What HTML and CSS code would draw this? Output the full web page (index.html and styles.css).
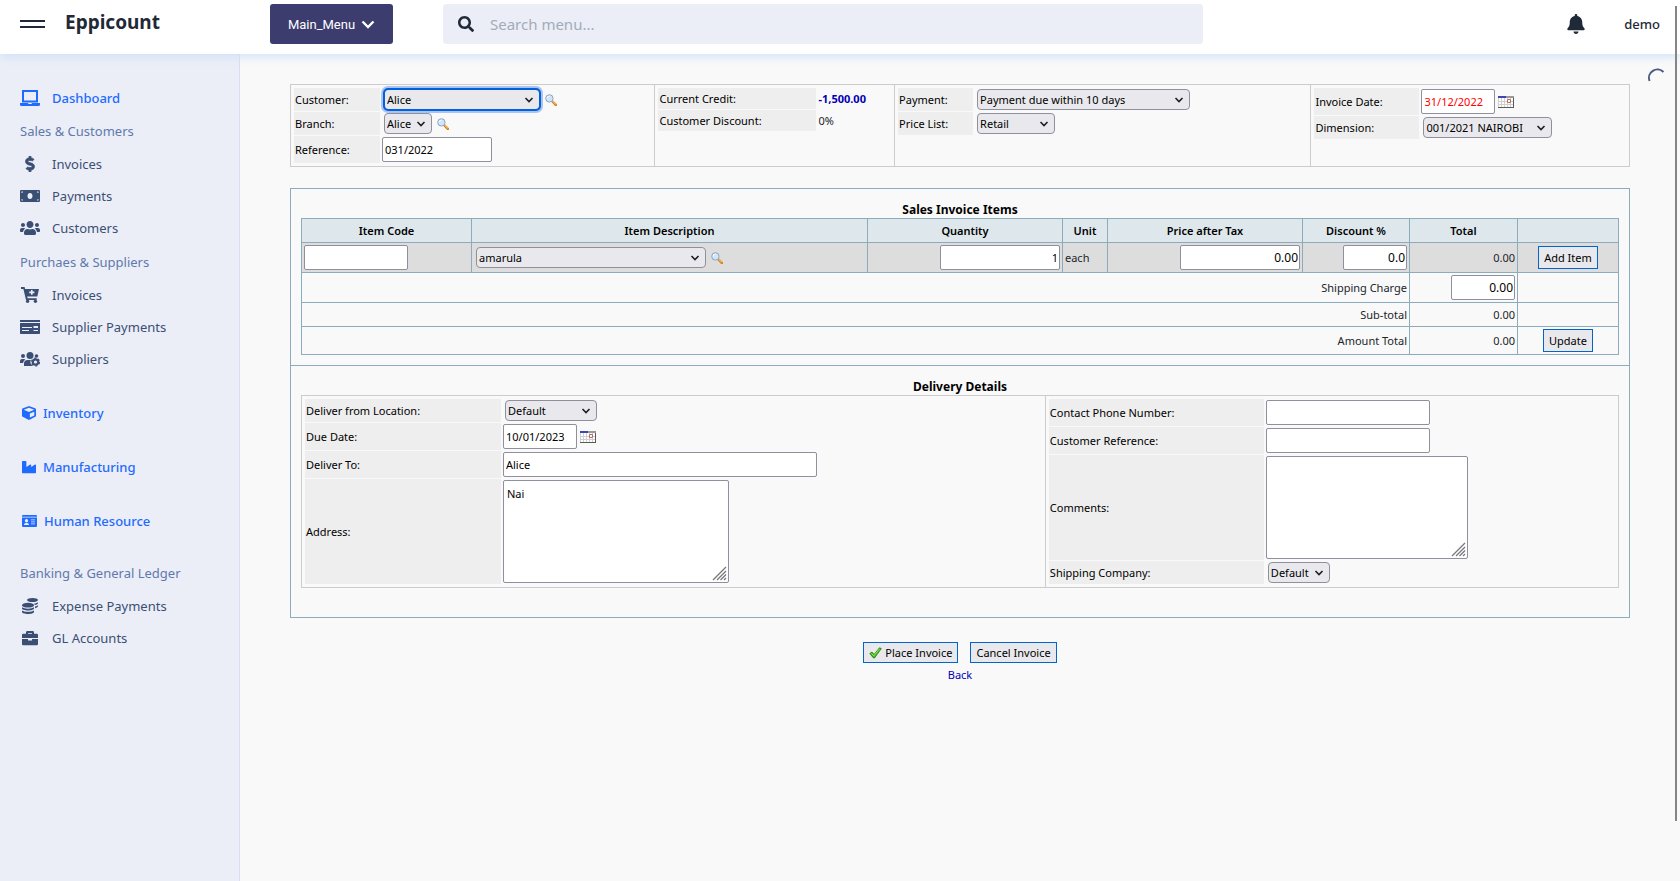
FILE: index.html
```html
<!DOCTYPE html>
<html lang="en">
<head>
<meta charset="utf-8">
<title>Eppicount</title>
<link rel="stylesheet" href="styles.css">
</head>
<body>
<svg class="defs" width="0" height="0" aria-hidden="true">
  <symbol id="chev" viewBox="0 0 10 8"><path d="M1.500 2 5 5.500 8.500 2" fill="none" stroke="#1d1d22" stroke-width="1.600"/></symbol>
  <symbol id="grip" viewBox="0 0 15 15"><path d="M1 14 14 1M5 14l9-9M8.500 14l5.500-5.500M12 14l2-2" fill="none" stroke="#77777c" stroke-width="1.300"/></symbol>
  <symbol id="lens" viewBox="0 0 12 12"><path d="m7.500 7.500 3.300 3.300" stroke="#c8781c" stroke-width="2.400" stroke-linecap="round"/><path d="m7.500 7 3.500 3.500" stroke="#f9b64c" stroke-width="1.200"/><circle cx="4.400" cy="4.400" r="3.700" fill="#cfe6fa" stroke="#8fa3c0"/><path d="M2.300 4.200a2 2 0 0 1 2-2" fill="none" stroke="#fff"/></symbol>
  <symbol id="cal" viewBox="0 0 16 12"><path d="M0 0h16v12H0z" fill="#5a5a5a"/><path d="M0 1h15v10H0z" fill="#fff"/><path d="M.5 2v9M3.500 2v9M6.500 2v9M9.500 2v9M12.500 2v9M0 5.500h15M0 8.500h15" stroke="#cfcfcf" fill="none"/><path d="M0 0h8v2H0z" fill="#3d45b0"/><path d="M8 0h8v2H8z" fill="#999"/><path d="M9.500 3.500h3v3h-3z" fill="#fff" stroke="#bd6a64"/></symbol>
</svg>

<header class="topbar">
  <button class="burger" type="button" aria-label="Toggle menu"><span></span><span></span></button>
  <h1 class="brand">Eppicount</h1>
  <button class="main-menu" type="button">Main_Menu
    <svg width="14" height="9" viewBox="0 0 14 9"><path d="m1.500 1.500 5.500 5.500 5.500-5.500" fill="none" stroke="#fff" stroke-width="2.400"/></svg>
  </button>
  <label class="search">
    <svg width="16" height="16" viewBox="0 0 512 512"><path fill="#1f2937" d="M505 442.700L405.300 343c-4.500-4.500-10.600-7-17-7H372c27.600-35.300 44-79.700 44-128C416 93.100 322.900 0 208 0S0 93.100 0 208s93.100 208 208 208c48.300 0 92.700-16.400 128-44v16.300c0 6.400 2.500 12.500 7 17l99.700 99.700c9.400 9.400 24.600 9.400 33.900 0l28.300-28.300c9.400-9.400 9.400-24.600.1-34zM208 336c-70.700 0-128-57.200-128-128 0-70.700 57.200-128 128-128 70.700 0 128 57.200 128 128 0 70.700-57.200 128-128 128z"/></svg>
    <input type="search" placeholder="Search menu..." aria-label="Search menu">
  </label>
  <div class="account">
    <button class="bell" type="button" aria-label="Notifications"><svg width="18" height="20" viewBox="0 0 448 512"><path fill="#1f2937" d="M224 512c35.320 0 63.970-28.650 63.970-64H160.030c0 35.350 28.650 64 63.970 64zm215.390-149.710c-19.320-20.760-55.470-51.990-55.470-154.290 0-77.700-54.480-139.900-127.940-155.160V32c0-17.670-14.320-32-31.980-32s-31.980 14.330-31.980 32v20.840C118.560 68.100 64.080 130.300 64.080 208c0 102.300-36.150 133.530-55.470 154.290-6 6.450-8.660 14.160-8.610 21.710.11 16.400 12.980 32 32.100 32h383.800c19.120 0 32-15.600 32.100-32 .05-7.550-2.610-15.270-8.610-21.710z"/></svg></button>
    <span class="user">demo</span>
  </div>
</header>

<div class="shell">
  <nav class="sidebar">
    <a class="item active" href="#"><svg width="20" height="16" viewBox="0 0 20 16"><path d="M3 1h14v10.500H3z" fill="none" stroke="currentColor" stroke-width="2"/><path d="M0 13h8l.5 1h3l.5-1h8v1.500A1.500 1.500 0 0 1 18.500 16h-17A1.500 1.500 0 0 1 0 14.500z" fill="currentColor"/></svg>Dashboard</a>
    <h2 class="group">Sales &amp; Customers</h2>
    <a class="item" href="#"><svg width="20" height="16" viewBox="-176 0 640 512"><path fill="currentColor" d="M209.200 233.400l-108-31.600C88.700 198.200 80 186.500 80 173.500c0-16.300 13.200-29.500 29.500-29.500h66.300c12.200 0 24.200 3.700 34.200 10.500 6.100 4.100 14.300 3.100 19.500-2l34.800-34c7.100-6.900 6.100-18.400-1.800-24.500C238 74.800 207.400 64.100 176 64V16c0-8.800-7.200-16-16-16h-32c-8.800 0-16 7.200-16 16v48h-2.500C45.800 64-5.400 118.700.5 183.600c4.200 46.100 39.400 83.600 83.800 96.600l102.500 30c12.500 3.700 21.200 15.300 21.200 28.300 0 16.300-13.200 29.500-29.500 29.500h-66.300C100 368 88 364.300 78 357.500c-6.100-4.100-14.300-3.100-19.500 2l-34.800 34c-7.100 6.900-6.100 18.400 1.800 24.500 24.500 19.200 55.100 29.900 86.500 30v48c0 8.800 7.200 16 16 16h32c8.800 0 16-7.200 16-16v-48.200c46.600-.9 90.300-28.600 105.700-72.700 21.500-61.600-14.600-124.800-72.500-141.700z" stroke="currentColor" stroke-width="24"/></svg>Invoices</a>
    <a class="item" href="#"><svg width="20" height="16" viewBox="0 0 20 16"><path fill="currentColor" fill-rule="evenodd" d="M1 2h18a1 1 0 0 1 1 1v10a1 1 0 0 1-1 1H1a1 1 0 0 1-1-1V3a1 1 0 0 1 1-1zm9 3C8.600 5 7.500 6.300 7.500 8s1.100 3 2.500 3 2.500-1.300 2.500-3S11.400 5 10 5zM1.500 3.500V5A1.500 1.500 0 0 0 3 3.500zm15.500 0A1.500 1.500 0 0 0 18.500 5V3.500zM1.500 11v1.500H3A1.500 1.500 0 0 0 1.500 11zm17 0a1.500 1.500 0 0 0-1.500 1.500h1.500z"/></svg>Payments</a>
    <a class="item" href="#"><svg width="20" height="16" viewBox="0 0 640 512"><path fill="currentColor" d="M96 224c35.300 0 64-28.700 64-64s-28.700-64-64-64-64 28.700-64 64 28.700 64 64 64zm448 0c35.300 0 64-28.700 64-64s-28.700-64-64-64-64 28.700-64 64 28.700 64 64 64zm32 32h-64c-17.600 0-33.500 7.100-45.100 18.600 40.300 22.100 68.900 62 75.100 109.400h66c17.700 0 32-14.300 32-32v-32c0-35.300-28.700-64-64-64zm-256 0c61.900 0 112-50.100 112-112S381.900 32 320 32 208 82.100 208 144s50.100 112 112 112zm76.800 32h-8.300c-20.800 10-43.900 16-68.500 16s-47.600-6-68.500-16h-8.300C179.600 288 128 339.600 128 403.200V432c0 26.500 21.500 48 48 48h288c26.500 0 48-21.500 48-48v-28.800c0-63.600-51.600-115.200-115.200-115.200zm-223.700-13.400C161.500 263.100 145.600 256 128 256H64c-35.300 0-64 28.700-64 64v32c0 17.700 14.300 32 32 32h65.900c6.300-47.400 34.900-87.300 75.200-109.400z"/></svg>Customers</a>
    <h2 class="group suppliers">Purchaes &amp; Suppliers</h2>
    <a class="item" href="#"><svg width="20" height="16" viewBox="0 0 20 16"><path fill="currentColor" fill-rule="evenodd" d="M1 0h3.600l.5 2H19l-1.700 7.600H7.200l.4 1.600h9.300l-.4 1.800H6L3.400 1.900H1zM11 3v1.600H9.200v1.600H11v1.600h1.600V6.200h1.800V4.600h-1.800V3z"/><circle cx="7.600" cy="14.300" r="1.700" fill="currentColor"/><circle cx="15.400" cy="14.300" r="1.700" fill="currentColor"/></svg>Invoices</a>
    <a class="item" href="#"><svg width="20" height="16" viewBox="0 0 20 16"><path fill="currentColor" fill-rule="evenodd" d="M0 1h20v2H0zm0 3h20v10.200a.8.8 0 0 1-.8.8H.8a.8.8 0 0 1-.8-.8zm2 4v1h10V8zm0 3v1h7v-1zm11.500-4v2H18V7zm0 4v1H18v-1z"/></svg>Supplier Payments</a>
    <a class="item" href="#"><svg width="20" height="16" viewBox="0 0 20 16"><g fill="currentColor"><circle cx="10" cy="4.500" r="3.500"/><circle cx="3" cy="5" r="2"/><circle cx="16.500" cy="5" r="1.800"/><path d="M0 12v-2a2 2 0 0 1 2-2h2c.6 0 1.100.2 1.400.6A5 5 0 0 0 3 12zM4 15v-2.400A3.600 3.600 0 0 1 7.600 9h3.200A5 5 0 0 0 13 15z"/></g><circle cx="15.500" cy="11" r="2.700" fill="none" stroke="currentColor" stroke-width="2.200"/><circle cx="15.500" cy="11" r="4" fill="none" stroke="currentColor" stroke-width="1.200" stroke-dasharray="2.200 2"/></svg>Suppliers</a>
    <a class="item solo" href="#"><svg width="14" height="14" viewBox="0 0 512 512"><path fill="currentColor" d="M239.100 6.300l-208 78c-18.700 7-31.100 25-31.100 45v225.100c0 18.200 10.300 34.800 26.500 42.900l208 104c13.500 6.800 29.400 6.800 42.900 0l208-104c16.300-8.100 26.500-24.800 26.500-42.900V129.300c0-20-12.400-37.900-31.100-44.900l-208-78C262 2.200 250 2.200 239.100 6.300zM256 68.400l192 72v1.100l-192 78-192-78v-1.100l192-72zm32 356V275.500l160-65v133.900l-160 80z"/></svg>Inventory</a>
    <a class="item solo" href="#"><svg width="14" height="14" viewBox="0 0 512 512"><path fill="currentColor" d="M475.115 163.781L336 252.309v-68.280c0-18.916-20.931-30.399-36.885-20.248L160 252.309V56c0-13.255-10.745-24-24-24H24C10.745 32 0 42.745 0 56v400c0 13.255 10.745 24 24 24h464c13.255 0 24-10.745 24-24V184.029c0-18.917-20.931-30.399-36.885-20.248z"/></svg>Manufacturing</a>
    <a class="item solo" href="#"><svg width="15" height="14" viewBox="0 0 15 14"><path fill="currentColor" fill-rule="evenodd" d="M1 1h13a1 1 0 0 1 1 1v.8H0V2a1 1 0 0 1 1-1zM0 3.600h15V12a1 1 0 0 1-1 1H1a1 1 0 0 1-1-1zM4.500 5a1.700 1.700 0 1 0 0 3.400 1.700 1.700 0 0 0 0-3.400zM2 11h5c0-1.300-.8-2-2-2H4c-1.200 0-2 .7-2 2zm7-5.500v.8h4v-.8zm0 2v.8h4v-.8zm0 2v.8h4v-.8z"/></svg>Human Resource</a>
    <h2 class="group last">Banking &amp; General Ledger</h2>
    <a class="item" href="#"><svg width="20" height="16" viewBox="0 0 20 16"><g fill="currentColor"><ellipse cx="12.500" cy="2" rx="5.500" ry="2"/><path d="M14 5.700c1.900-.3 3.300-.9 4-1.500v1c0 .8-1.300 1.500-3.200 1.900zM15 8.600c1.300-.3 2.400-.8 3-1.300v1c0 .8-1.200 1.500-3 1.900z"/><ellipse cx="8" cy="7.200" rx="6" ry="2.400"/><path d="M2 9.300c1.200.9 3.500 1.400 6 1.400s4.800-.5 6-1.400v1.200c0 1.100-2.700 2-6 2s-6-.9-6-2zM2 12.500c1.200.8 3.500 1.300 6 1.300s4.800-.5 6-1.300V14c0 1.100-2.700 2-6 2s-6-.9-6-2z"/></g></svg>Expense Payments</a>
    <a class="item" href="#"><svg width="20" height="16" viewBox="0 0 20 16"><path fill="currentColor" fill-rule="evenodd" d="M2 9h6v1.500h4V9h6v5a1.200 1.200 0 0 1-1.200 1.200H3.200A1.200 1.200 0 0 1 2 14zm0-1V5a1.200 1.200 0 0 1 1.200-1.200H6V2.400A1.400 1.400 0 0 1 7.400 1h5.200A1.400 1.400 0 0 1 14 2.400v1.400h2.800A1.200 1.200 0 0 1 18 5v3zM8 3.800h4V3H8z"/></svg>GL Accounts</a>
  </nav>

  <main class="content">
    <svg class="spinner" width="24" height="24" viewBox="0 0 24 24" aria-hidden="true"><path d="M3.500 15A8.500 8.500 0 0 1 17.500 6" fill="none" stroke="#4a5a82" stroke-width="2"/></svg>

    <form class="invoice">
      <section class="panel heading-panel">
        <div class="column lw-86">
          <div class="row"><label for="customer">Customer:</label><span class="pick w-156 focus"><select id="customer"><option>Alice</option></select><svg><use href="#chev"/></svg></span><svg class="lens"><use href="#lens"/></svg></div>
          <div class="row"><label for="branch">Branch:</label><span class="pick w-48"><select id="branch"><option>Alice</option></select><svg><use href="#chev"/></svg></span><svg class="lens"><use href="#lens"/></svg></div>
          <div class="row"><label for="reference">Reference:</label><input id="reference" class="w-110" type="text" value="031/2022"></div>
        </div>
        <div class="column lw-158">
          <div class="row text"><span class="label">Current Credit:</span><a class="credit" href="#">-1,500.00</a></div>
          <div class="row text"><span class="label">Customer Discount:</span><span class="value">0%</span></div>
        </div>
        <div class="column lw-75">
          <div class="row"><label for="payment">Payment:</label><span class="pick w-213"><select id="payment"><option>Payment due within 10 days</option></select><svg><use href="#chev"/></svg></span></div>
          <div class="row"><label for="pricelist">Price List:</label><span class="pick w-78"><select id="pricelist"><option>Retail</option></select><svg><use href="#chev"/></svg></span></div>
        </div>
        <div class="column lw-105">
          <div class="row"><label for="invdate">Invoice Date:</label><input id="invdate" class="w-74 overdue" type="text" value="31/12/2022"><svg class="cal"><use href="#cal"/></svg></div>
          <div class="row"><label for="dimension">Dimension:</label><span class="pick w-129"><select id="dimension"><option>001/2021 NAIROBI</option></select><svg><use href="#chev"/></svg></span></div>
        </div>
      </section>

      <div class="details">
        <section class="block">
          <h3 class="title">Sales Invoice Items</h3>
          <table class="items">
            <colgroup><col class="c-code"><col><col class="c-amount"><col class="c-unit"><col class="c-amount"><col class="c-discount"><col class="c-total"><col class="c-action"></colgroup>
            <thead><tr><th>Item Code</th><th>Item Description</th><th>Quantity</th><th>Unit</th><th>Price after Tax</th><th>Discount %</th><th>Total</th><th></th></tr></thead>
            <tbody>
              <tr class="entry">
                <td><input class="w-104" type="text" aria-label="Item code"></td>
                <td><div class="cell"><span class="pick w-230"><select aria-label="Item"><option>amarula</option></select><svg><use href="#chev"/></svg></span><svg class="lens"><use href="#lens"/></svg></div></td>
                <td class="num"><input class="w-120 num" type="text" value="1" aria-label="Quantity"></td>
                <td>each</td>
                <td class="num"><input class="w-120 num wide" type="text" value="0.00" aria-label="Price"></td>
                <td class="num"><input class="w-64 num wide" type="text" value="0.0" aria-label="Discount"></td>
                <td class="num">0.00</td>
                <td class="mid"><button class="btn" type="button">Add Item</button></td>
              </tr>
              <tr class="tall"><td colspan="6" class="num"><label for="shipping">Shipping Charge</label></td><td class="num"><input id="shipping" class="w-64 num wide" type="text" value="0.00"></td><td></td></tr>
              <tr class="short"><td colspan="6" class="num">Sub-total</td><td class="num">0.00</td><td></td></tr>
              <tr class="medium"><td colspan="6" class="num">Amount Total</td><td class="num">0.00</td><td class="mid"><button class="btn" type="button">Update</button></td></tr>
            </tbody>
          </table>
        </section>
        <section class="block delivery">
          <h3 class="title">Delivery Details</h3>
          <div class="panel delivery-panel">
            <div class="column lw-196">
              <div class="row"><label for="location">Deliver from Location:</label><span class="pick w-92"><select id="location"><option>Default</option></select><svg><use href="#chev"/></svg></span></div>
              <div class="row"><label for="due">Due Date:</label><input id="due" class="w-74" type="text" value="10/01/2023"><svg class="cal"><use href="#cal"/></svg></div>
              <div class="row"><label for="deliverto">Deliver To:</label><input id="deliverto" class="w-314" type="text" value="Alice"></div>
              <div class="row"><label for="address">Address:</label><span class="area w-226"><textarea id="address">Nai</textarea><svg><use href="#grip"/></svg></span></div>
            </div>
            <div class="column lw-215">
              <div class="row"><label for="phone">Contact Phone Number:</label><input id="phone" class="w-164" type="text"></div>
              <div class="row"><label for="custref">Customer Reference:</label><input id="custref" class="w-164" type="text"></div>
              <div class="row"><label for="comments">Comments:</label><span class="area w-202"><textarea id="comments"></textarea><svg><use href="#grip"/></svg></span></div>
              <div class="row"><label for="shipper">Shipping Company:</label><span class="pick w-62"><select id="shipper"><option>Default</option></select><svg><use href="#chev"/></svg></span></div>
            </div>
          </div>
        </section>
      </div>

      <div class="actions">
        <button class="btn" type="button"><svg width="13" height="12" viewBox="0 0 13 12"><path d="M.8 6.500 3 5l2 2.500L10.500.8l1.800.8L5.500 11h-1z" fill="#3db81e" stroke="#1f7d10" stroke-width=".8"/><path d="m2.500 6.500 2.300 2.300L10.500 2" fill="none" stroke="#a5ee60" stroke-width=".9"/></svg>Place Invoice</button>
        <button class="btn" type="button">Cancel Invoice</button>
      </div>
      <a class="back" href="#">Back</a>
    </form>
  </main>
</div>
<div class="scrollbar" aria-hidden="true"></div>
</body>
</html>
```

FILE: styles.css
```css
*, *::before, *::after { box-sizing: border-box; }

body {
  margin: 0;
  min-height: 100vh;
  display: flex;
  flex-direction: column;
  background: #f9f9f9;
  color: #212529;
  font-family: "Noto Sans", "Open Sans", sans-serif;
  font-size: 14px;
}

a { text-decoration: none; }
button, input, select, textarea { font-family: inherit; margin: 0; }
.defs { position: absolute; }

/* top bar */
.topbar {
  position: relative;
  display: flex;
  align-items: flex-start;
  height: 54px;
  padding: 4px 20px 0;
  background: #fff;
  box-shadow: 0 2px 10px #cddffa;
  z-index: 2;
}
.burger {
  display: flex;
  flex-direction: column;
  gap: 4px;
  width: 25px;
  margin-top: 16px;
  padding: 0;
  border: 0;
  background: none;
}
.burger span { height: 2px; background: #1f2937; }
.brand {
  width: 205px;
  margin: 4px 0 0 20px;
  font-size: 19px;
  line-height: 28px;
  font-weight: 700;
  color: #1f2937;
}
.main-menu {
  display: flex;
  align-items: center;
  justify-content: center;
  gap: 6px;
  width: 123px;
  height: 40px;
  padding: 0;
  border: 0;
  border-radius: 3px;
  background: #3c3d6e;
  color: #fff;
  font-family: Roboto, sans-serif;
  font-size: 13px;
}
.search {
  display: flex;
  align-items: center;
  gap: 16px;
  flex: 0 1 760px;
  height: 40px;
  margin-left: 50px;
  padding: 0 15px;
  border-radius: 4px;
  background: #ebeef6;
}
.search input {
  flex: 1;
  min-width: 0;
  padding: 0;
  border: 0;
  outline: 0;
  background: none;
  font-size: 15px;
}
.search input::placeholder { color: #a3abba; }
.account {
  display: flex;
  align-items: center;
  gap: 39px;
  height: 40px;
  margin-left: auto;
}
.bell { padding: 0; border: 0; background: none; line-height: 0; }
.user { font-size: 13px; font-weight: 500; color: #1f2937; }

/* page frame */
.shell { display: flex; flex: 1; }
.sidebar {
  flex: 0 0 240px;
  padding: 28px 20px;
  border-right: 1px solid #d8def0;
  background: #ebeef6;
}
.item {
  display: flex;
  align-items: center;
  gap: 12px;
  height: 32px;
  font-size: 13px;
  color: #3b4f75;
}
.active, .solo { color: #1f6bff; font-weight: 500; }
.solo { gap: 7px; margin-top: 22px; padding-left: 2px; }
.group {
  margin: 0;
  font-size: 13px;
  line-height: 34px;
  font-weight: 400;
  color: #6079ad;
}
.group.suppliers { margin-top: 1px; }
.group.last { margin-top: 19px; }

.content {
  position: relative;
  flex: 1;
  min-width: 0;
  padding: 30px 50px;
}
.spinner { position: absolute; top: 12px; right: 10px; }
.scrollbar {
  position: absolute;
  top: 6px;
  right: 3px;
  bottom: 60px;
  width: 2px;
  background: #858585;
  z-index: 3;
}

/* field panels */
.invoice { font-size: 11px; line-height: 15px; color: #000; }
.panel { display: grid; border: 1px solid #ccc; }
.heading-panel { grid-template-columns: 364fr 240fr 417fr 319fr; }
.delivery-panel { grid-template-columns: 744fr 574fr; }
.column {
  display: flex;
  flex-direction: column;
  gap: 1px;
  padding: 3px;
}
.column + .column { border-left: 1px solid #ccc; }
.row { display: flex; align-items: center; }
.row > label, .label {
  display: flex;
  align-items: center;
  align-self: stretch;
  margin-right: 2px;
  padding: 0 1px;
  background: #eee;
}
.row.text { height: 21px; }
.credit { color: #0000b4; font-weight: 700; }
.value { color: #212529; }

.lw-86 .row > label { width: 86px; }
.lw-158 .label { width: 158px; }
.lw-75 .row > label { width: 75px; }
.lw-105 .row > label { width: 105px; }
.lw-196 .row > label { width: 196px; }
.lw-215 .row > label { width: 215px; }

.invoice input, .invoice textarea {
  height: 25px;
  padding: 0 2px;
  border: 1px solid #8f8f9d;
  border-radius: 2px;
  background: #fff;
  color: #000;
  font-size: 11px;
}
.row > input { margin: 1px 0; }
.pick { position: relative; display: flex; margin: 1px 2px; }
.pick select {
  appearance: none;
  width: 100%;
  height: 21px;
  padding: 0 2px;
  border: 1px solid #8f8f9d;
  border-radius: 4px;
  background: #e9e9ed;
  color: #000;
  font-size: 11px;
}
.pick svg {
  position: absolute;
  top: 7px;
  right: 6px;
  width: 10px;
  height: 8px;
  pointer-events: none;
}
.focus select {
  outline: 2px solid #0060df;
  outline-offset: -1px;
  box-shadow: 0 0 0 3px #a9c4ee;
}
.area { position: relative; display: flex; margin: 1px 0; }
.area textarea { width: 100%; height: 103px; padding: 5px 3px; resize: none; }
.area svg {
  position: absolute;
  right: 2px;
  bottom: 2px;
  width: 15px;
  height: 15px;
  pointer-events: none;
}
.lens { width: 12px; height: 12px; margin-left: 3px; }
.cal { width: 16px; height: 12px; margin-left: 3px; }
.invoice .overdue { color: #f00; }

.w-48 { width: 48px; }
.w-62 { width: 62px; }
.w-64 { width: 64px; }
.w-74 { width: 74px; }
.w-78 { width: 78px; }
.w-92 { width: 92px; }
.w-104 { width: 104px; }
.w-110 { width: 110px; }
.w-120 { width: 120px; }
.w-129 { width: 129px; }
.w-156 { width: 156px; }
.w-164 { width: 164px; }
.w-202 { width: 202px; }
.w-213 { width: 213px; }
.w-226 { width: 226px; }
.w-230 { width: 230px; }
.w-314 { width: 314px; }

/* items and delivery */
.details { margin-top: 21px; border: 1px solid #8cacbb; }
.block { padding: 12px 10px 10px; }
.delivery { padding-bottom: 29px; border-top: 1px solid #8cacbb; }
.title {
  margin: 0;
  font-size: 12px;
  line-height: 17px;
  font-weight: 700;
  text-align: center;
}
.items {
  width: 100%;
  table-layout: fixed;
  border-collapse: collapse;
  color: #212529;
}
.c-code { width: 170px; }
.c-amount { width: 195px; }
.c-unit { width: 45px; }
.c-discount { width: 107px; }
.c-total { width: 108px; }
.c-action { width: 101px; }
.items th, .items td { padding: 0 2px; border: 1px solid #8cacbb; }
.items th { height: 24px; background: #dee7ec; color: #000; font-weight: 600; }
.items input { display: block; }
.items .num { text-align: right; }
.items input.num { margin-left: auto; padding-right: 1px; }
.invoice input.wide { font-size: 12px; }
.items .mid { text-align: center; }
.entry { height: 30px; background: #ddd; }
.tall { height: 30px; }
.short { height: 24px; }
.medium { height: 28px; }
.cell { display: flex; align-items: center; }

.btn {
  display: inline-flex;
  align-items: center;
  gap: 3px;
  height: 23px;
  padding: 0 5px;
  border: 1px solid #0066cc;
  background: #e9e9ed;
  color: #000;
  font-size: 11px;
}
.items .btn { display: flex; margin: 0 auto; }
.actions {
  display: flex;
  justify-content: center;
  gap: 12px;
  margin-top: 24px;
}
.actions .btn { height: 21px; }
.back {
  display: block;
  width: max-content;
  margin: 4px auto 0;
  color: #0000b4;
}
```
